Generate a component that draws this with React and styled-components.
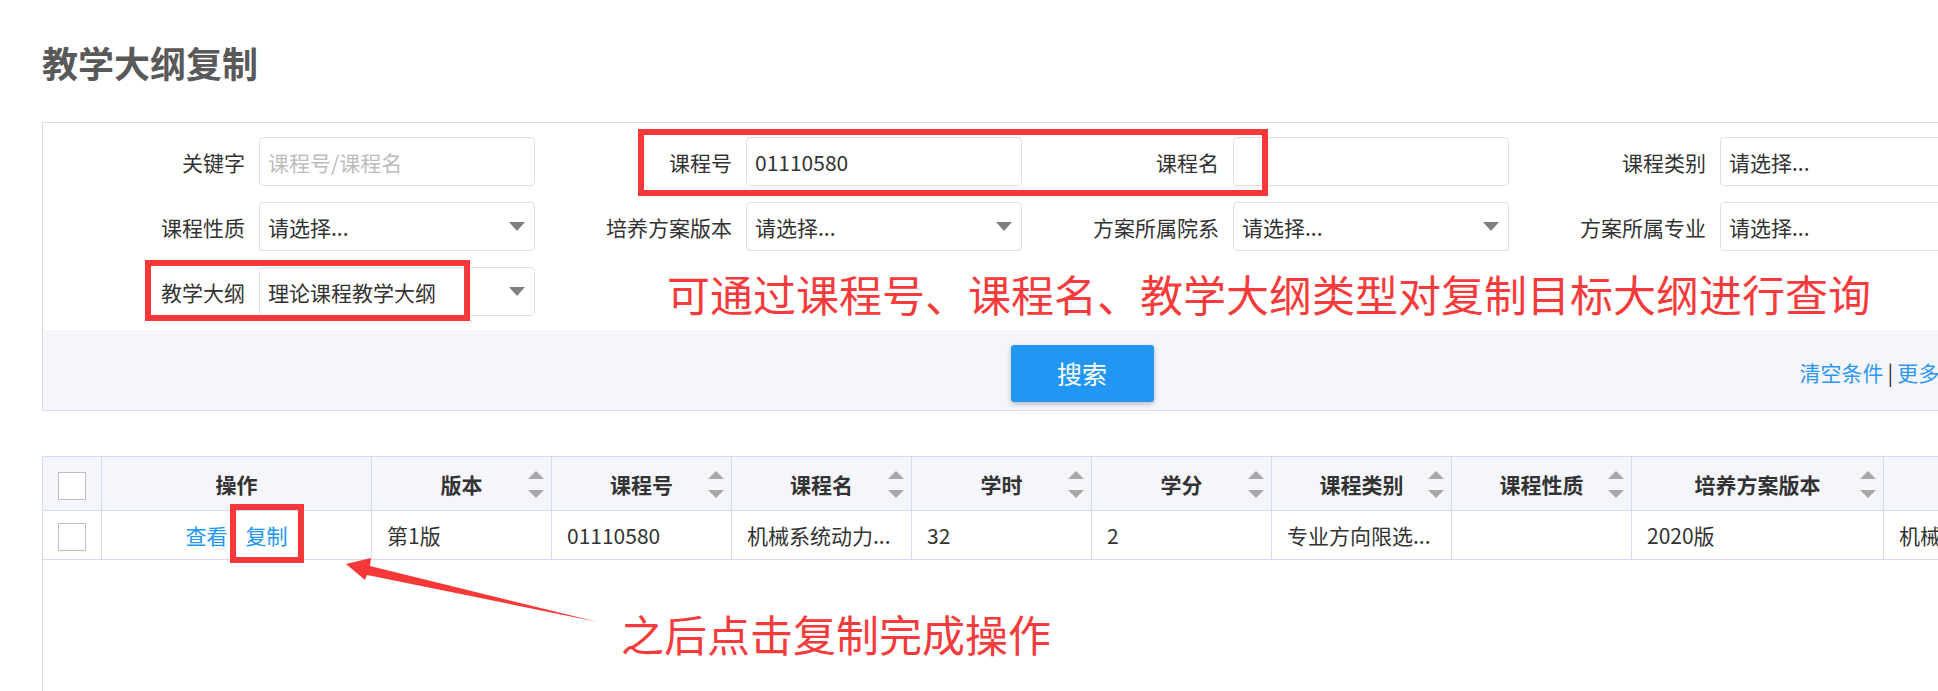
import React from 'react';
import styled, { createGlobalStyle } from 'styled-components';

const GlobalStyle = createGlobalStyle`
  html, body {
    margin: 0;
    padding: 0;
    background: #fff;
    overflow: hidden;
  }
  body {
    font-family: "Noto Sans CJK SC", "Noto Sans", sans-serif;
    color: #333;
  }
`;

const Page = styled.div`
  position: relative;
  width: 1938px;
  height: 691px;
  overflow: hidden;
  padding-left: 42px;
  box-sizing: border-box;
`;

const Title = styled.h1`
  margin: 0;
  padding-top: 38px;
  line-height: 48px;
  font-size: 36px;
  font-weight: bold;
  color: #595959;
  margin-bottom: 36px;
`;

const FilterPanel = styled.div`
  width: 2080px;
  border: 1px solid #d6daf0;
  box-sizing: border-box;
`;

const FieldGrid = styled.div`
  display: grid;
  grid-template-columns: repeat(4, 487px);
  grid-auto-rows: 49px;
  row-gap: 16px;
  padding: 14px 0 14px 5px;
`;

const Field = styled.div`
  display: flex;
  align-items: center;
`;

const Label = styled.label`
  width: 211px;
  padding-right: 14px;
  box-sizing: border-box;
  text-align: right;
  font-size: 21px;
  color: #333;
  white-space: nowrap;
`;

const Box = styled.div`
  width: 276px;
  height: 49px;
  box-sizing: border-box;
  border: 1px solid #dcdfe8;
  border-radius: 4px;
  padding: 0 9px 0 8px;
  display: flex;
  align-items: center;
  font-size: 21px;
  color: ${(p) => (p.$placeholder ? '#bcbcbc' : '#333')};
  white-space: nowrap;
`;

const Caret = styled.span`
  margin-left: auto;
  width: 0;
  height: 0;
  border-left: 8px solid transparent;
  border-right: 8px solid transparent;
  border-top: 9px solid #7f7f7f;
`;

const Hint = styled.div`
  grid-column: 2 / span 3;
  padding-left: 132px;
  display: flex;
  align-items: center;
  font-size: 43px;
  color: #f53b3b;
  white-space: nowrap;
  margin-top: 3px;
`;

const PanelFooter = styled.div`
  background: #f5f6fb;
  height: 80px;
  display: grid;
  grid-template-columns: 1fr auto 1fr;
  align-items: center;
`;

const SearchButton = styled.button`
  grid-column: 2;
  width: 143px;
  height: 57px;
  border: none;
  border-radius: 3px;
  background: #2196f3;
  color: #fff;
  font-family: inherit;
  font-size: 25px;
  box-shadow: 0 2px 5px rgba(0, 0, 0, 0.25);
  margin-top: 6px;
`;

const Links = styled.div`
  justify-self: start;
  margin-left: 646px;
  font-size: 21px;
  color: #2f96f3;
  white-space: nowrap;
  margin-top: 4px;
`;

const Sep = styled.span`
  color: #333;
  margin: 0 4px;
`;

const TableArea = styled.div`
  margin-top: 45px;
  border-left: 1px solid #d6daf0;
  height: 240px;
  width: 2200px;
`;

const Table = styled.table`
  border-collapse: collapse;
  table-layout: fixed;
`;

const Th = styled.th`
  position: relative;
  height: 53px;
  padding: 0;
  background: #f5f6fb;
  border: 1px solid #d6daf0;
  font-size: 21px;
  font-weight: bold;
  color: #333;
  text-align: center;
  white-space: nowrap;
  &:first-child {
    border-left: none;
  }
`;

const Td = styled.td`
  height: 48px;
  padding: 0 15px;
  border: 1px solid #d6daf0;
  font-size: 21px;
  color: #333;
  white-space: nowrap;
  overflow: hidden;
  text-align: ${(p) => (p.$center ? 'center' : 'left')};
  &:first-child {
    border-left: none;
  }
`;

const SortIcon = styled.span`
  position: absolute;
  right: 7px;
  top: 14px;
  display: flex;
  flex-direction: column;
  gap: 11px;
  &::before,
  &::after {
    content: '';
    width: 0;
    height: 0;
    border-left: 8px solid transparent;
    border-right: 8px solid transparent;
  }
  &::before {
    border-bottom: 8px solid #a8a8a8;
  }
  &::after {
    border-top: 8px solid #a8a8a8;
  }
`;

const Check = styled.span`
  display: inline-block;
  width: 28px;
  height: 28px;
  box-sizing: border-box;
  border: 1px solid #bdbdbd;
  background: #fff;
  vertical-align: middle;
`;

const OpLink = styled.a`
  color: #2196f3;
  margin: 0 9px;
  cursor: pointer;
`;

const Note = styled.div`
  margin-top: 47px;
  margin-left: 578px;
  font-size: 43px;
  line-height: 52px;
  color: #f53b3b;
  white-space: nowrap;
`;

const Mark = styled.div`
  position: absolute;
  left: ${(p) => p.$x}px;
  top: ${(p) => p.$y}px;
  width: ${(p) => p.$w}px;
  height: ${(p) => p.$h}px;
  border: 6px solid #f83838;
  box-sizing: border-box;
  pointer-events: none;
`;

const ArrowSvg = styled.svg`
  position: absolute;
  left: 340px;
  top: 550px;
  pointer-events: none;
`;

const columns = [
  { key: 'check', width: 58 },
  { key: 'op', title: '操作', width: 270 },
  { key: 'ver', title: '版本', width: 180, sort: true },
  { key: 'code', title: '课程号', width: 180, sort: true },
  { key: 'name', title: '课程名', width: 180, sort: true },
  { key: 'hours', title: '学时', width: 180, sort: true },
  { key: 'credit', title: '学分', width: 180, sort: true },
  { key: 'type', title: '课程类别', width: 180, sort: true },
  { key: 'nature', title: '课程性质', width: 180, sort: true },
  { key: 'plan', title: '培养方案版本', width: 252, sort: true },
  { key: 'dept', title: '方案所属院系', width: 300, sort: true },
];

const row = {
  ver: '第1版',
  code: '01110580',
  name: '机械系统动力...',
  hours: '32',
  credit: '2',
  type: '专业方向限选...',
  nature: '',
  plan: '2020版',
  dept: '机械工程学院',
};

function SelectBox({ value }) {
  return (
    <Box $placeholder={false}>
      {value}
      <Caret />
    </Box>
  );
}

function Filters() {
  return (
    <FilterPanel>
      <FieldGrid>
        <Field>
          <Label>关键字</Label>
          <Box $placeholder>课程号/课程名</Box>
        </Field>
        <Field>
          <Label>课程号</Label>
          <Box>01110580</Box>
        </Field>
        <Field>
          <Label>课程名</Label>
          <Box />
        </Field>
        <Field>
          <Label>课程类别</Label>
          <SelectBox value="请选择..." />
        </Field>

        <Field>
          <Label>课程性质</Label>
          <SelectBox value="请选择..." />
        </Field>
        <Field>
          <Label>培养方案版本</Label>
          <SelectBox value="请选择..." />
        </Field>
        <Field>
          <Label>方案所属院系</Label>
          <SelectBox value="请选择..." />
        </Field>
        <Field>
          <Label>方案所属专业</Label>
          <SelectBox value="请选择..." />
        </Field>

        <Field>
          <Label>教学大纲</Label>
          <SelectBox value="理论课程教学大纲" />
        </Field>
        <Hint>可通过课程号、课程名、教学大纲类型对复制目标大纲进行查询</Hint>
      </FieldGrid>
      <PanelFooter>
        <SearchButton>搜索</SearchButton>
        <Links>
          清空条件<Sep>|</Sep>更多条件
        </Links>
      </PanelFooter>
    </FilterPanel>
  );
}

function ResultTable() {
  return (
    <TableArea>
      <Table>
        <colgroup>
          {columns.map((c) => (
            <col key={c.key} style={{ width: c.width }} />
          ))}
        </colgroup>
        <thead>
          <tr>
            {columns.map((c) => (
              <Th key={c.key}>
                {c.key === 'check' ? <Check /> : c.title}
                {c.sort && <SortIcon />}
              </Th>
            ))}
          </tr>
        </thead>
        <tbody>
          <tr>
            {columns.map((c) => {
              if (c.key === 'check') {
                return (
                  <Td key={c.key} $center>
                    <Check />
                  </Td>
                );
              }
              if (c.key === 'op') {
                return (
                  <Td key={c.key} $center>
                    <OpLink>查看</OpLink>
                    <OpLink>复制</OpLink>
                  </Td>
                );
              }
              return <Td key={c.key}>{row[c.key]}</Td>;
            })}
          </tr>
        </tbody>
      </Table>
      <Note>之后点击复制完成操作</Note>
    </TableArea>
  );
}

export default function App() {
  return (
    <Page>
      <GlobalStyle />
      <Title>教学大纲复制</Title>
      <Filters />
      <ResultTable />

      <Mark $x={638} $y={129} $w={630} $h={67} />
      <Mark $x={145} $y={260} $w={325} $h={61} />
      <Mark $x={230} $y={504} $w={74} $h={59} />

      <ArrowSvg width="270" height="80" viewBox="340 550 270 80">
        <polygon
          points="346,564 371,558 370,566 598,622 367,575 365,580"
          fill="#f83838"
        />
      </ArrowSvg>
    </Page>
  );
}
